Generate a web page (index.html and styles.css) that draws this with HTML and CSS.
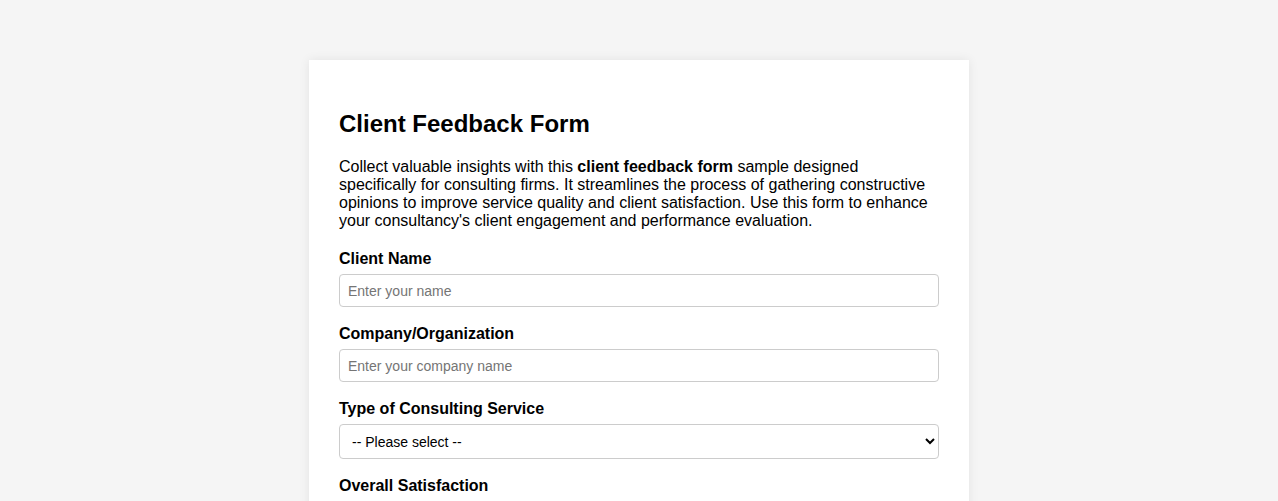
FILE: index.html
```html
<!DOCTYPE html>
<html lang="en">
<head>
<meta charset="utf-8">
<title>Client Feedback Form</title>
<link rel="stylesheet" href="styles.css">
</head>
<body>
<div class="card">
  <h1 class="title">Client Feedback Form</h1>
  <p class="intro">Collect valuable insights with this <strong>client feedback form</strong> sample designed specifically for consulting firms. It streamlines the process of gathering constructive opinions to improve service quality and client satisfaction. Use this form to enhance your consultancy's client engagement and performance evaluation.</p>
  <form class="form">
    <div class="field">
      <label class="label" for="name">Client Name</label>
      <input class="input" id="name" type="text" placeholder="Enter your name">
    </div>
    <div class="field">
      <label class="label" for="company">Company/Organization</label>
      <input class="input" id="company" type="text" placeholder="Enter your company name">
    </div>
    <div class="field">
      <label class="label" for="service">Type of Consulting Service</label>
      <select class="select" id="service">
        <option>-- Please select --</option>
        <option>Strategy</option>
        <option>Operations</option>
      </select>
    </div>
    <div class="field">
      <label class="label">Overall Satisfaction</label>
    </div>
  </form>
</div>
</body>
</html>
```

FILE: styles.css
```css
html, body {
  margin: 0;
  padding: 0;
}
body {
  background: #f5f5f5;
  font-family: "Liberation Sans", Arial, sans-serif;
  color: #000;
}
.card {
  width: 600px;
  margin: 60px auto;
  padding: 30px;
  background: #fff;
  box-shadow: 0 0 10px rgba(0, 0, 0, 0.08);
}
.title {
  font-size: 24px;
  font-weight: bold;
  margin: 20px 0 20px;
}
.intro {
  font-size: 16px;
  line-height: 18px;
  margin: 0 0 20px;
}
.form {
  display: flex;
  flex-direction: column;
}
.field {
  display: flex;
  flex-direction: column;
  margin-bottom: 18px;
}
.label {
  font-size: 16px;
  font-weight: bold;
  line-height: 18px;
  margin-bottom: 6px;
}
.input, .select {
  font-family: "Liberation Sans", Arial, sans-serif;
  font-size: 14px;
  border: 1px solid #ccc;
  border-radius: 4px;
  padding: 8px;
  box-sizing: border-box;
  width: 100%;
  color: #000;
  background: #fff;
}
.input {
  height: 33px;
}
.input::placeholder {
  color: #757575;
}
.select {
  height: 35px;
  padding: 8px 6px 8px 8px;
}
```
